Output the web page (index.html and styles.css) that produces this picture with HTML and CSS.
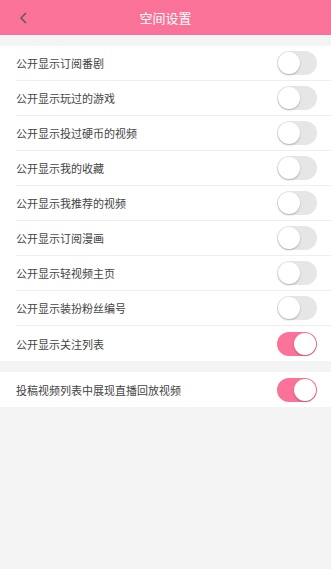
FILE: index.html
```html
<!DOCTYPE html>
<html lang="zh">
<head>
    <meta charset="UTF-8">
    <meta name="viewport" content="width=device-width, initial-scale=1.0">
    <title>空间设置</title>
    <link rel="stylesheet" href="styles.css">
</head>
<body>
    <div class="header">
        <span class="back">
            <svg width="9" height="12" viewBox="0 0 9 12"><path d="M7 1 L2 6 L7 11" fill="none" stroke="#555" stroke-width="1.4"/></svg>
        </span>
        <span class="title">空间设置</span>
    </div>

    <div class="group">
        <div class="row"><span>公开显示订阅番剧</span><span class="switch"></span></div>
        <div class="row"><span>公开显示玩过的游戏</span><span class="switch"></span></div>
        <div class="row"><span>公开显示投过硬币的视频</span><span class="switch"></span></div>
        <div class="row"><span>公开显示我的收藏</span><span class="switch"></span></div>
        <div class="row"><span>公开显示我推荐的视频</span><span class="switch"></span></div>
        <div class="row"><span>公开显示订阅漫画</span><span class="switch"></span></div>
        <div class="row"><span>公开显示轻视频主页</span><span class="switch"></span></div>
        <div class="row"><span>公开显示装扮粉丝编号</span><span class="switch"></span></div>
        <div class="row"><span>公开显示关注列表</span><span class="switch on"></span></div>
    </div>

    <div class="group">
        <div class="row"><span>投稿视频列表中展现直播回放视频</span><span class="switch on"></span></div>
    </div>
</body>
</html>
```

FILE: styles.css
```css
body {
    font-family: "Noto Sans CJK SC", "Noto Sans", sans-serif;
    margin: 0;
    padding: 0;
    background-color: #f4f4f4;
    height: 569px;
}
.header {
    height: 35px;
    background-color: #fb7299;
    display: flex;
    align-items: center;
    justify-content: center;
    position: relative;
}
.back {
    position: absolute;
    left: 19px;
    top: 12px;
    display: flex;
}
.title {
    color: white;
    font-size: 13px;
}
.group {
    background-color: white;
    margin-top: 11px;
    padding-left: 16px;
}
.row {
    height: 35px;
    display: flex;
    align-items: center;
    justify-content: space-between;
    padding-right: 14px;
    border-bottom: 1px solid #eeeeee;
    box-sizing: border-box;
    font-size: 11px;
    color: #444;
}
.row:last-child {
    border-bottom: none;
}
.switch {
    width: 40px;
    height: 24px;
    border-radius: 12px;
    background-color: #e6e6e6;
    position: relative;
    box-sizing: border-box;
}
.switch::after {
    content: "";
    position: absolute;
    left: 1px;
    top: 1px;
    width: 22px;
    height: 22px;
    border-radius: 50%;
    background-color: white;
    box-shadow: 0 1px 2px rgba(0, 0, 0, 0.25);
}
.switch.on {
    background-color: #fb7299;
}
.switch.on::after {
    left: 17px;
}
```
